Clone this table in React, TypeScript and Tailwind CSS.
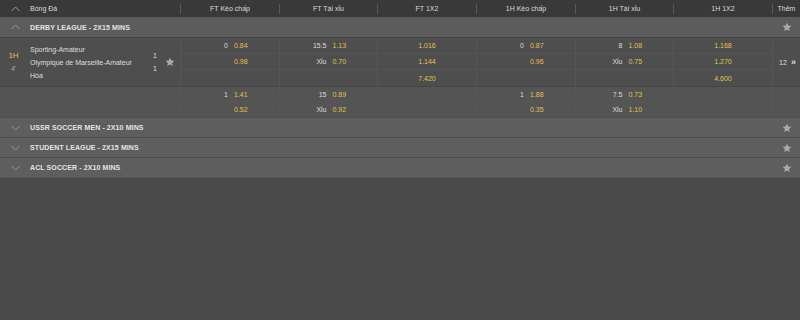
import React from 'react';

const cols = 'grid grid-cols-[180px_99px_98px_99px_99px_98px_99px_1fr]';

const Chevron = ({ up }: { up?: boolean }) => (
  <svg width="9" height="6" viewBox="0 0 9 6" className="text-[#9a9a9a]">
    <polyline
      points={up ? '0.5,5 4.5,1 8.5,5' : '0.5,1 4.5,5 8.5,1'}
      fill="none"
      stroke="currentColor"
      strokeWidth="1"
    />
  </svg>
);

const Star = () => (
  <svg width="10" height="10" viewBox="0 0 24 24" className="text-[#a9a9a9]">
    <path
      fill="currentColor"
      d="M12 1.5l3.2 6.8 7.3.9-5.4 5 1.4 7.3L12 17.9l-6.5 3.6 1.4-7.3-5.4-5 7.3-.9z"
    />
  </svg>
);

type Odd = { hdp?: string; odd?: string } | null;

const HdpCell = ({ o }: { o: Odd }) => (
  <div className="grid grid-cols-2 items-center h-full">
    <span className="text-right pr-[2px] text-[#dcdcdc]">{o?.hdp}</span>
    <span className="pl-[4px] text-[#e2c04e]">{o?.odd}</span>
  </div>
);

const OneCell = ({ v }: { v?: string }) => (
  <div className="flex items-center justify-center h-full text-[#e2c04e]">{v}</div>
);

const headers = ['FT Kèo chấp', 'FT Tài xỉu', 'FT 1X2', '1H Kèo chấp', '1H Tài xỉu', '1H 1X2'];

const block1 = {
  ftH: [{ hdp: '0', odd: '0.84' }, { odd: '0.98' }, null],
  ftT: [{ hdp: '15.5', odd: '1.13' }, { hdp: 'Xỉu', odd: '0.70' }, null],
  ft1: ['1.016', '1.144', '7.420'],
  hH: [{ hdp: '0', odd: '0.87' }, { odd: '0.96' }, null],
  hT: [{ hdp: '8', odd: '1.08' }, { hdp: 'Xỉu', odd: '0.75' }, null],
  h1: ['1.168', '1.270', '4.600'],
};

const block2 = {
  ftH: [{ hdp: '1', odd: '1.41' }, { odd: '0.52' }],
  ftT: [{ hdp: '15', odd: '0.89' }, { hdp: 'Xỉu', odd: '0.92' }],
  hH: [{ hdp: '1', odd: '1.88' }, { odd: '0.35' }],
  hT: [{ hdp: '7.5', odd: '0.73' }, { hdp: 'Xỉu', odd: '1.10' }],
};

const OddsCol = ({ children }: { children: React.ReactNode }) => (
  <div className="flex flex-col border-l border-[#575757]">{children}</div>
);

// one odds line; h is fixed per block
const Sub = ({ h, last, children }: { h: string; last: boolean; children?: React.ReactNode }) => (
  <div className={`${h} ${last ? '' : 'border-b border-[#555555]'}`}>{children}</div>
);

const LeagueRow = ({ name, open }: { name: string; open?: boolean }) => (
  <div
    className={`flex items-center h-[20px] ${
      open ? 'bg-[#5c5c5c]' : 'bg-[#5e5e5e] border-t border-[#4d4d4d]'
    }`}
  >
    <div className="w-[30px] flex justify-center pl-[1px]">
      <Chevron up={open} />
    </div>
    <span className="flex-1 font-bold text-[#e4e4e4] tracking-[0.1px]">{name}</span>
    <div className="w-[28px] flex justify-center pl-[2px]">
      <Star />
    </div>
  </div>
);

const App: React.FC = () => {
  return (
    <div
      className="w-[800px] h-[320px] bg-[#4a4a4a] text-[7px] leading-none text-[#dedede] overflow-hidden"
      style={{ fontFamily: '"Liberation Sans", Arial, sans-serif' }}
    >
      {/* Header */}
      <div className={`${cols} h-[17px] bg-[#393939] items-center`}>
        <div className="flex items-center h-full">
          <div className="w-[30px] flex justify-center pl-[1px]">
            <Chevron up />
          </div>
          <span className="text-[#dadada]">Bóng Đá</span>
        </div>
        {headers.map((h) => (
          <div key={h} className="flex items-center h-full">
            <div className="w-px h-[10px] bg-[#595959]" />
            <span className="flex-1 text-center text-[#dadada]">{h}</span>
          </div>
        ))}
        <div className="flex items-center h-full">
          <div className="w-px h-[10px] bg-[#595959]" />
          <span className="flex-1 text-center text-[#dadada]">Thêm</span>
        </div>
      </div>

      <LeagueRow name="DERBY LEAGUE - 2X15 MINS" open />

      {/* Match block 1 */}
      <div className={`${cols} bg-[#4e4e4e] border-t border-[#444444]`}>
        <div className="flex items-center h-[48px]">
          <div className="w-[30px] flex flex-col items-center gap-[5px] pr-[3px]">
            <span className="text-[#e2c04e] text-[8px]">1H</span>
            <span className="text-[#a8a8a8]">4'</span>
          </div>
          <div className="flex-1 flex flex-col gap-[6px]">
            <span>Sporting-Amateur</span>
            <span>Olympique de Marseille-Amateur</span>
            <span>Hòa</span>
          </div>
          <div className="w-[10px] flex flex-col gap-[6px] items-center pb-[1px]">
            <span>1</span>
            <span>1</span>
          </div>
          <div className="w-[20px] flex justify-center">
            <Star />
          </div>
        </div>
        <OddsCol>
          {block1.ftH.map((o, i) => (
            <Sub key={i} h="h-[16px]" last={i === 2}>
              <HdpCell o={o} />
            </Sub>
          ))}
        </OddsCol>
        <OddsCol>
          {block1.ftT.map((o, i) => (
            <Sub key={i} h="h-[16px]" last={i === 2}>
              <HdpCell o={o} />
            </Sub>
          ))}
        </OddsCol>
        <OddsCol>
          {block1.ft1.map((v, i) => (
            <Sub key={i} h="h-[16px]" last={i === 2}>
              <OneCell v={v} />
            </Sub>
          ))}
        </OddsCol>
        <OddsCol>
          {block1.hH.map((o, i) => (
            <Sub key={i} h="h-[16px]" last={i === 2}>
              <HdpCell o={o} />
            </Sub>
          ))}
        </OddsCol>
        <OddsCol>
          {block1.hT.map((o, i) => (
            <Sub key={i} h="h-[16px]" last={i === 2}>
              <HdpCell o={o} />
            </Sub>
          ))}
        </OddsCol>
        <OddsCol>
          {block1.h1.map((v, i) => (
            <Sub key={i} h="h-[16px]" last={i === 2}>
              <OneCell v={v} />
            </Sub>
          ))}
        </OddsCol>
        <div className="flex items-center justify-center gap-[4px] border-l border-[#575757] pl-[2px]">
          <span className="text-[#dcdcdc]">12</span>
          <span className="text-[#dcdcdc] text-[9px] font-bold">»</span>
        </div>
      </div>

      {/* Match block 2 */}
      <div className={`${cols} bg-[#545454] border-t border-[#464646]`}>
        <div />
        {[block2.ftH, block2.ftT].map((col, c) => (
          <OddsCol key={c}>
            {col.map((o, i) => (
              <Sub key={i} h="h-[15px]" last={i === 1}>
                <HdpCell o={o} />
              </Sub>
            ))}
          </OddsCol>
        ))}
        <OddsCol>
          <Sub h="h-[15px]" last={false} />
          <Sub h="h-[15px]" last />
        </OddsCol>
        {[block2.hH, block2.hT].map((col, c) => (
          <OddsCol key={c}>
            {col.map((o, i) => (
              <Sub key={i} h="h-[15px]" last={i === 1}>
                <HdpCell o={o} />
              </Sub>
            ))}
          </OddsCol>
        ))}
        <OddsCol>
          <Sub h="h-[15px]" last={false} />
          <Sub h="h-[15px]" last />
        </OddsCol>
        <OddsCol>{null}</OddsCol>
      </div>

      <LeagueRow name="USSR SOCCER MEN - 2X10 MINS" />
      <LeagueRow name="STUDENT LEAGUE - 2X15 MINS" />
      <LeagueRow name="ACL SOCCER - 2X10 MINS" />
      <div className="border-t border-[#565656]" />
    </div>
  );
};

export default App;
